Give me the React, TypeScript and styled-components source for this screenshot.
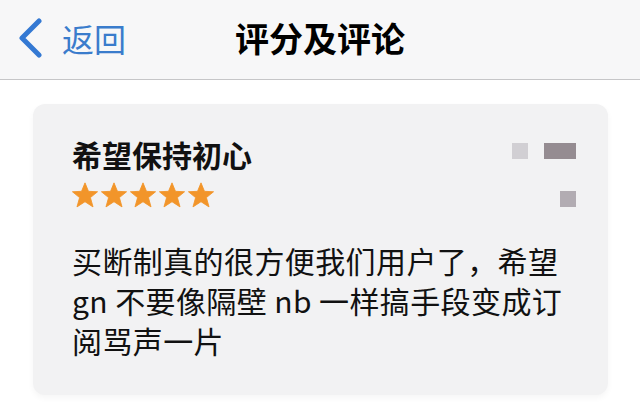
import React from "react";
import styled, { createGlobalStyle } from "styled-components";

const GlobalStyle = createGlobalStyle`
  html, body {
    margin: 0;
    padding: 0;
    background: #ffffff;
  }
  body {
    font-family: "Noto Sans CJK SC", "Noto Sans", sans-serif;
    color: #111;
  }
`;

const Page = styled.div`
  width: 640px;
  height: 416px;
  overflow: hidden;
  background: #fff;
`;

const NavBar = styled.header`
  height: 80px;
  box-sizing: border-box;
  background: #f7f7f8;
  border-bottom: 1px solid #c6c6c8;
  display: grid;
  grid-template-columns: 1fr auto 1fr;
  align-items: center;
  padding-bottom: 4px;
`;

const BackButton = styled.div`
  display: flex;
  align-items: center;
  gap: 19px;
  padding-left: 17px;
  color: #3a7ccc;
  font-size: 32px;
  cursor: pointer;
`;

const NavTitle = styled.h1`
  margin: 0;
  font-size: 34px;
  font-weight: 700;
  color: #000;
`;

const Card = styled.section`
  margin: 24px 32px 0 33px;
  background: #f2f2f3;
  border-radius: 12px;
  padding: 32px 32px 35px 39px;
  box-shadow: 0 3px 6px rgba(0, 0, 0, 0.04);
`;

const CardTop = styled.div`
  display: flex;
  justify-content: space-between;
  align-items: flex-start;
`;

const ReviewTitle = styled.h2`
  margin: 0;
  font-size: 30px;
  line-height: 36px;
  font-weight: 700;
  color: #111;
`;

const Stars = styled.div`
  display: flex;
  gap: 3px;
  margin-top: 10px;
  height: 26px;
`;

const Mosaic = styled.div`
  display: flex;
  flex-direction: column;
  align-items: flex-end;
  gap: 32px;
  margin-top: 7px;
`;

const MosaicRow = styled.div`
  display: flex;
  gap: 16px;
`;

const Pixel = styled.div<{ $w: number; $c: string }>`
  width: ${(p) => p.$w}px;
  height: 16px;
  background: ${(p) => p.$c};
`;

const Body = styled.p`
  margin: 32px 0 0;
  font-size: 30px;
  line-height: 40px;
  letter-spacing: 0.4px;
  color: #111;
  width: 500px;
`;

const Star = () => (
  <svg width="26" height="26" viewBox="0 0 24 24">
    <polygon
      points="12,0.8 15.2,8.6 23.6,9 17,14.4 19.4,23 12,18.2 4.6,23 7,14.4 0.4,9 8.8,8.6"
      fill="#f2952a"
      stroke="#f2952a"
      strokeWidth="0.8"
      strokeLinejoin="round"
    />
  </svg>
);

const Chevron = () => (
  <svg width="26" height="40" viewBox="0 0 26 40">
    <polyline
      points="22,3 5,20 22,37"
      fill="none"
      stroke="#3479d3"
      strokeWidth="5"
      strokeLinecap="round"
      strokeLinejoin="round"
    />
  </svg>
);

export default function App() {
  return (
    <Page>
      <GlobalStyle />
      <NavBar>
        <BackButton>
          <Chevron />
          <span>返回</span>
        </BackButton>
        <NavTitle>评分及评论</NavTitle>
        <div />
      </NavBar>
      <Card>
        <CardTop>
          <div>
            <ReviewTitle>希望保持初心</ReviewTitle>
            <Stars>
              {[0, 1, 2, 3, 4].map((i) => (
                <Star key={i} />
              ))}
            </Stars>
          </div>
          <Mosaic>
            <MosaicRow>
              <Pixel $w={16} $c="#d1cfd3" />
              <Pixel $w={32} $c="#958c91" />
            </MosaicRow>
            <MosaicRow>
              <Pixel $w={16} $c="#b2acb2" />
            </MosaicRow>
          </Mosaic>
        </CardTop>
        <Body>
          买断制真的很方便我们用户了，希望gn 不要像隔壁 nb 一样搞手段变成订阅骂声一片
        </Body>
      </Card>
    </Page>
  );
}
